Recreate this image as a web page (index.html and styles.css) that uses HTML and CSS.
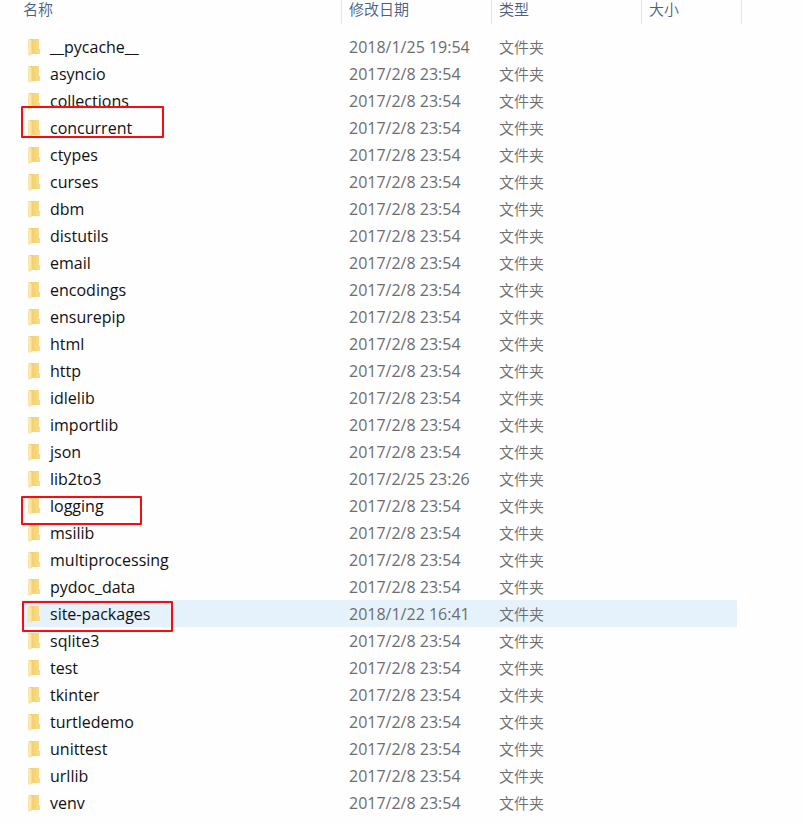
FILE: index.html
```html
<!DOCTYPE html>
<html lang="zh-CN">
<head>
    <meta charset="UTF-8">
    <meta name="viewport" content="width=device-width, initial-scale=1.0">
    <title>Lib</title>
    <link rel="stylesheet" href="styles.css">
</head>
<body>
    <!-- folder icon, used in every row -->
    <svg class="defs" aria-hidden="true">
        <defs>
            <linearGradient id="back" x1="0" x2="1" y1="0" y2="0">
                <stop offset="0" stop-color="#f0cc68"/>
                <stop offset="1" stop-color="#f9dc8b"/>
            </linearGradient>
        </defs>
        <symbol id="folder" viewBox="0 0 12 18">
            <path d="M1 0h10v10h1v5H3z" fill="url(#back)"/>
            <path d="M0 0h1l3 2v13l-2 2-2-1z" fill="#fbe7a9"/>
            <path d="M3 2h1v13l-1 1z" fill="#f6dc92"/>
        </symbol>
    </svg>

    <table class="files">
        <colgroup>
            <col>
            <col class="col-date">
            <col class="col-type">
            <col class="col-size">
        </colgroup>
        <thead>
            <tr><th>名称</th><th>修改日期</th><th>类型</th><th>大小</th></tr>
        </thead>
        <tbody id="list"></tbody>
    </table>

    <script src="files.js"></script>
</body>
</html>
```

FILE: styles.css
```css
body {
    margin: 0;
    padding: 0 60px 6px 22px;
    background: #fefefe;
    font-family: "Open Sans", "Noto Sans CJK SC", sans-serif;
    font-size: 16px;
    color: #111;
}

.defs {
    position: absolute;
    width: 0;
    height: 0;
}

.files {
    width: 100%;
    table-layout: fixed;
    border-collapse: separate;
    border-spacing: 0;
}

.col-date,
.col-type {
    width: 150px;
}

.col-size {
    width: 100px;
}

th {
    height: 24px;
    padding: 0 7px;
    box-sizing: border-box;
    border-right: 1px solid #e2e5e8;
    font-family: "Noto Sans CJK SC", sans-serif;
    font-size: 15px;
    font-weight: 350;
    line-height: 18px;
    text-align: left;
    vertical-align: top;
    color: #4a5f82;
}

th:first-child {
    padding-left: 1px;
}

/* gap between the header and the first file */
tbody::before {
    content: "";
    display: table-row;
    height: 9px;
}

td {
    height: 27px;
    padding: 0 7px;
    box-sizing: border-box;
    line-height: 26px;
    vertical-align: middle;
    white-space: nowrap;
    color: #6d6d6d;
}

td:last-child {
    border-right: 5px solid #fefefe;
}

.name {
    position: relative;
    padding-left: 6px;
    color: #111;
}

.name svg {
    display: inline-block;
    width: 12px;
    height: 18px;
    margin-right: 10px;
    vertical-align: -4px;
}

.type {
    font-family: "Noto Sans CJK SC", sans-serif;
    font-size: 15px;
    font-weight: 350;
    line-height: 24px;
}

.selected td {
    background: #e5f2fc;
}

/* red frames drawn over the list */
.mark {
    position: absolute;
    left: -1px;
    box-sizing: border-box;
    border: 2px solid #fb0a0e;
    border-radius: 1px;
    z-index: 1;
}

.mark-concurrent {
    top: -8px;
    width: 143px;
    height: 32px;
}

.mark-logging {
    top: 4px;
    width: 121px;
    height: 29px;
}

.mark-site-packages {
    top: 1px;
    left: 0;
    width: 151px;
    height: 31px;
}
```

FILE: files.js
```js
const files = [
    ['__pycache__', '2018/1/25 19:54'],
    ['asyncio', '2017/2/8 23:54'],
    ['collections', '2017/2/8 23:54'],
    ['concurrent', '2017/2/8 23:54'],
    ['ctypes', '2017/2/8 23:54'],
    ['curses', '2017/2/8 23:54'],
    ['dbm', '2017/2/8 23:54'],
    ['distutils', '2017/2/8 23:54'],
    ['email', '2017/2/8 23:54'],
    ['encodings', '2017/2/8 23:54'],
    ['ensurepip', '2017/2/8 23:54'],
    ['html', '2017/2/8 23:54'],
    ['http', '2017/2/8 23:54'],
    ['idlelib', '2017/2/8 23:54'],
    ['importlib', '2017/2/8 23:54'],
    ['json', '2017/2/8 23:54'],
    ['lib2to3', '2017/2/25 23:26'],
    ['logging', '2017/2/8 23:54'],
    ['msilib', '2017/2/8 23:54'],
    ['multiprocessing', '2017/2/8 23:54'],
    ['pydoc_data', '2017/2/8 23:54'],
    ['site-packages', '2018/1/22 16:41'],
    ['sqlite3', '2017/2/8 23:54'],
    ['test', '2017/2/8 23:54'],
    ['tkinter', '2017/2/8 23:54'],
    ['turtledemo', '2017/2/8 23:54'],
    ['unittest', '2017/2/8 23:54'],
    ['urllib', '2017/2/8 23:54'],
    ['venv', '2017/2/8 23:54']
];
const marked = ['concurrent', 'logging', 'site-packages'];
const selected = 'site-packages';

const list = document.getElementById('list');

files.forEach(([name, date]) => {
    const mark = marked.includes(name) ? `<span class="mark mark-${name}"></span>` : '';
    const row = document.createElement('tr');
    if (name === selected) row.className = 'selected';
    row.innerHTML = `
        <td class="name"><svg aria-hidden="true"><use href="#folder"/></svg>${name}${mark}</td>
        <td class="date">${date}</td>
        <td class="type">文件夹</td>
        <td></td>`;
    list.appendChild(row);
});
```
